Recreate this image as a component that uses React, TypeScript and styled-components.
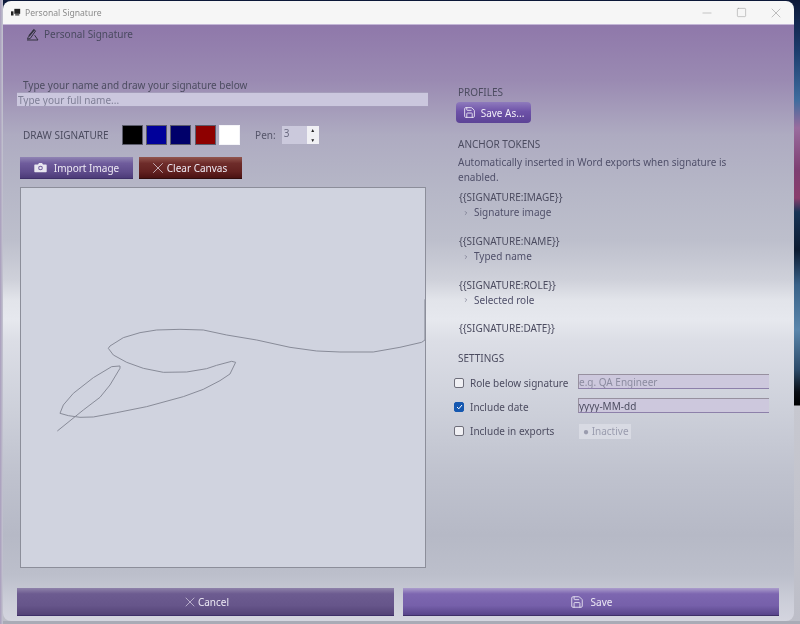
import React from "react";
import styled, { createGlobalStyle } from "styled-components";
import { X, Save, ChevronRight, Minus, Square } from "lucide-react";

const Global = createGlobalStyle`
  html, body { margin: 0; padding: 0; }
  body { width: 800px; height: 624px; overflow: hidden; font-family: "Noto Sans", "Open Sans", sans-serif; }
  * { box-sizing: border-box; }
`;

const Desktop = styled.div`
  width: 800px;
  height: 624px;
  padding: 1px 6px 3px 3px;
  overflow: hidden;
  background:
    linear-gradient(to right, #a89cbc 0, #c4c6d0 3px, transparent 3px),
    linear-gradient(to bottom, transparent 621px, #a9abb6 621px),
    linear-gradient(to bottom, #0c1838 0, #1c3c6c 50px, #3f6c9e 100px, #9a6c9e 128px, #7e3f72 170px, #8a3d6c 198px, #183456 212px, #0c1a30 250px, #3a6288 285px, #5a86ac 330px, #2c4a68 370px, #090d14 392px, #000 405px, #c7c8d0 406px, #bdbec8 624px);
  filter: blur(0.35px);
`;

const Window = styled.div`
  width: 791px;
  height: 620px;
  display: flex;
  flex-direction: column;
  border-radius: 8px;
  overflow: hidden;
`;

const TitleBar = styled.div`
  height: 24px;
  flex: none;
  display: flex;
  align-items: center;
  padding: 0 10px 0 8px;
  background: #f6f6f6;
  border-bottom: 1px solid #c3b6d6;
`;

const TitleText = styled.span`
  margin-left: 4px;
  flex: 1;
  font-size: 8.6px;
  color: #8b8b8b;
`;

const WinButtons = styled.div`
  display: flex;
  align-items: center;
  gap: 21.5px;
  color: #8a8a8a;
`;

const Content = styled.div`
  flex: 1;
  display: flex;
  flex-direction: column;
  padding: 0 15px 6px 14px;
  background: linear-gradient(to bottom,
    #8f78aa 0, #9a8ab2 55px, #aeabc1 110px, #b6b7c7 165px, #bdbfcc 215px, #cfd1da 255px,
    #e2e4ea 275px, #e6e8ee 295px, #dcdee6 315px, #cdd0da 385px, #bfc2ce 450px, #b6b9c6 510px,
    #bcbfcb 550px, #cbcdd8 575px, #d4d5df 596px);
  color: #4c4c60;
  font-size: 10px;
`;

const PageHeader = styled.div`
  height: 54px;
  flex: none;
  display: flex;
  align-items: flex-start;
  gap: 5px;
  padding: 3px 0 0 9px;
  font-size: 10px;
  line-height: 13px;
  color: #4a4a60;
`;

const Columns = styled.div`
  display: grid;
  grid-template-columns: 411px 312px;
  column-gap: 30px;
`;

const LeftCol = styled.div`
  display: flex;
  flex-direction: column;
`;

const RightCol = styled.div`
  display: flex;
  flex-direction: column;
  padding-top: 6px;
`;

const Hint = styled.div`
  height: 13px;
  line-height: 13px;
  padding-left: 6px;
`;

const NameInput = styled.input`
  height: 15px;
  width: 100%;
  padding: 0 1px;
  border: none;
  border-top: 1px solid #a59dbb;
  border-bottom: 1px solid #a59dbb;
  background: #cbc7de;
  font: inherit;
  line-height: 13px;
  outline: none;
  &::placeholder { color: #7f7f96; opacity: 1; }
`;

const ToolRow = styled.div`
  height: 20px;
  margin-top: 18px;
  padding-left: 6px;
  display: flex;
  align-items: center;
`;

const SectionLabel = styled.span`
  color: #4c4c60;
  font-size: 10px;
  line-height: 14px;
`;

const Swatches = styled.div`
  display: flex;
  gap: 3.4px;
  margin-left: 13px;
`;

const Swatch = styled.div<{ $color: string }>`
  width: 21px;
  height: 20px;
  background: ${(p) => p.$color};
  border: 1px solid ${(p) => (p.$color === "#ffffff" ? "#f4f4f8" : "#5c5c6c")};
`;

const PenLabel = styled.span`
  margin-left: 15px;
  color: #55556a;
`;

const Spinner = styled.div`
  margin-left: 6px;
  width: 37px;
  height: 18px;
  display: flex;
  background: #cbc9dc;
`;

const SpinnerValue = styled.span`
  flex: 1;
  font-size: 10px;
  line-height: 14px;
  padding-left: 2px;
  color: #6a6a80;
`;

const SpinnerArrows = styled.div`
  width: 12px;
  display: flex;
  flex-direction: column;
  justify-content: space-between;
  background: #f0f0f4;
  color: #222;
  font-size: 5px;
  line-height: 8px;
  text-align: center;
`;

const ActionRow = styled.div`
  display: flex;
  gap: 6px;
  margin-top: 12px;
  margin-left: 3px;
`;

const ActionButton = styled.button<{ $tone: "purple" | "red" }>`
  height: 22px;
  width: ${(p) => (p.$tone === "purple" ? "113px" : "103px")};
  padding: 0 ${(p) => (p.$tone === "purple" ? "0" : "5px")} 0 0;
  display: flex;
  align-items: center;
  justify-content: center;
  gap: ${(p) => (p.$tone === "purple" ? "7px" : "0")};
  border: none;
  border-bottom: 1px solid ${(p) => (p.$tone === "purple" ? "#3e2f68" : "#300c0c")};
  color: #eeeaf4;
  font: inherit;
  background: ${(p) =>
    p.$tone === "purple"
      ? "linear-gradient(to bottom, #9084b4 0, #6f5c9c 30%, #5f4c8c 70%, #4c3b78 100%)"
      : "linear-gradient(to bottom, #92564f 0, #6e2c2a 30%, #622120 70%, #4a1212 100%)"};
`;

const Canvas = styled.div`
  margin-top: 8px;
  margin-left: 3px;
  width: 406px;
  height: 381px;
  background: #d0d3df;
  border: 1px solid #8c8e9a;
`;

const Ink = styled.svg`
  display: block;
  width: 100%;
  height: 100%;
`;

const Heading = styled.div<{ $gap?: number }>`
  margin-top: ${(p) => p.$gap ?? 0}px;
  line-height: 14px;
  height: 14px;
  font-size: 10px;
  color: #4c4c60;
`;

const SaveAs = styled.button`
  margin: 3px 0 0 -2px;
  width: 75px;
  height: 21px;
  padding: 0;
  display: flex;
  align-items: center;
  justify-content: center;
  gap: 5px;
  border: none;
  border-radius: 4px;
  color: #f0edf7;
  font: inherit;
  background: linear-gradient(to bottom, #8f7bbd 0, #6e52a8 45%, #5c4396 100%);
`;

const Description = styled.p`
  margin: 4px 0 0;
  width: 290px;
  line-height: 15px;
  color: #50506a;
`;

const Token = styled.div<{ $gap: number }>`
  margin-top: ${(p) => p.$gap}px;
  margin-left: 1px;
  height: 14px;
  line-height: 14px;
  color: #4c4c60;
`;

const TokenUse = styled.div`
  height: 15px;
  margin-top: 1px;
  display: flex;
  align-items: center;
  gap: 5px;
  padding-left: 5px;
  line-height: 15px;
  color: #50506a;
`;

const SettingRow = styled.div<{ $gap: number }>`
  margin-top: ${(p) => p.$gap}px;
  margin-left: -4px;
  height: 16px;
  display: grid;
  grid-template-columns: 124px 191px;
  align-items: center;
`;

const CheckLabel = styled.label`
  display: flex;
  align-items: center;
  gap: 6px;
  color: #4c4c60;
`;

const Box = styled.span<{ $on?: boolean }>`
  width: 10px;
  height: 10px;
  display: flex;
  align-items: center;
  justify-content: center;
  border-radius: 2px;
  border: 1px solid ${(p) => (p.$on ? "#1558b0" : "#6e6e7a")};
  background: ${(p) => (p.$on ? "#1558b0" : "#f0f0f4")};
`;

const FieldInput = styled.input`
  height: 15px;
  width: 100%;
  margin-bottom: 2px;
  padding: 0;
  border: none;
  border-top: 1px solid #97909f;
  border-left: 1px solid #97909f;
  border-bottom: 1px solid #8d80aa;
  background: #cdc8dd;
  color: #4c4c60;
  font: inherit;
  outline: none;
  &::placeholder { color: #8c8ca0; opacity: 1; }
`;

const Badge = styled.span`
  width: 52px;
  height: 15px;
  margin-left: 1px;
  padding-left: 4px;
  display: flex;
  align-items: center;
  background: #d8dae3;
  color: #9a9cae;
  line-height: 15px;
`;

const Footer = styled.div`
  margin-top: 20px;
  display: grid;
  grid-template-columns: 377px 376px;
  column-gap: 9px;
`;

const FooterButton = styled.button<{ $primary?: boolean }>`
  height: 28px;
  padding: 0;
  display: flex;
  align-items: center;
  justify-content: center;
  gap: ${(p) => (p.$primary ? "7px" : "0")};
  border: none;
  border-bottom: 1px solid #3e2f68;
  color: #ece8f4;
  font: inherit;
  background: ${(p) =>
    p.$primary
      ? "linear-gradient(to bottom, #ab9dcc 0, #7d66b0 22%, #7660aa 65%, #58448a 100%)"
      : "linear-gradient(to bottom, #8f82aa 0, #6c5b90 22%, #66558a 65%, #534276 100%)"};
`;

const AppIcon = () => (
  <svg width="10" height="10" viewBox="0 0 12 12">
    <rect x="0" y="4" width="3" height="5" fill="#222" />
    <rect x="4" y="1" width="7" height="6" fill="#222" />
    <rect x="5" y="7.5" width="5" height="1.5" fill="#333" />
  </svg>
);

const SignatureIcon = () => (
  <svg width="13" height="13" viewBox="0 0 13 13" fill="none" stroke="#33333f" strokeWidth="1">
    <path d="M1 12h11L8.600 7.200" />
    <path d="M2 9.600 7.800 1.600l1.800 1.300-5.400 7.600-2.600.6z" />
    <path d="M3 8 8.200 1.800" strokeWidth="1.600" />
  </svg>
);

const CameraIcon = () => (
  <svg width="13" height="11" viewBox="0 0 13 11">
    <path d="M1 2.500h3l1-1.500h3l1 1.500h3a.7.7 0 0 1 .7.7v6.300a.7.7 0 0 1-.7.7H1a.7.7 0 0 1-.7-.7V3.200a.7.7 0 0 1 .7-.7z" fill="#e8e6f0" />
    <circle cx="6.500" cy="6" r="2.300" fill="#6f5c9c" />
    <circle cx="6.500" cy="6" r="1.300" fill="#e8e6f0" />
  </svg>
);

const inkPoints =
  "1155,28 1155,150 1145,157 1080,172 1000,186 900,186 830,183 750,172 650,150 560,135 490,120 420,118 350,120 300,128 250,143 210,168 205,175 220,195 260,217 310,235 370,247 440,246 500,236 530,226 575,214 587,217 570,252 540,272 490,298 430,320 320,350 230,368 160,381 120,382 85,377 60,370 70,345 100,310 160,263 215,230 240,228 240,235 210,285 180,322 130,360 52,423";

const colors = ["#000000", "#00009a", "#00006a", "#8e0000", "#ffffff"];

const tokens = [
  { name: "{{SIGNATURE:IMAGE}}", use: "Signature image", gap: 5 },
  { name: "{{SIGNATURE:NAME}}", use: "Typed name", gap: 14 },
  { name: "{{SIGNATURE:ROLE}}", use: "Selected role", gap: 13.5 },
  { name: "{{SIGNATURE:DATE}}", use: "", gap: 13.5 },
];

export default function App() {
  return (
    <Desktop>
      <Global />
      <Window>
        <TitleBar>
          <AppIcon />
          <TitleText>Personal Signature</TitleText>
          <WinButtons>
            <Minus size={14} strokeWidth={0.8} />
            <Square size={11} strokeWidth={1} />
            <X size={16} strokeWidth={0.8} />
          </WinButtons>
        </TitleBar>
        <Content>
          <PageHeader>
            <SignatureIcon />
            Personal Signature
          </PageHeader>
          <Columns>
            <LeftCol>
              <Hint>Type your name and draw your signature below</Hint>
              <NameInput placeholder="Type your full name..." readOnly />
              <ToolRow>
                <SectionLabel>DRAW SIGNATURE</SectionLabel>
                <Swatches>
                  {colors.map((c) => (
                    <Swatch key={c} $color={c} />
                  ))}
                </Swatches>
                <PenLabel>Pen:</PenLabel>
                <Spinner>
                  <SpinnerValue>3</SpinnerValue>
                  <SpinnerArrows>
                    <span>▲</span>
                    <span>▼</span>
                  </SpinnerArrows>
                </Spinner>
              </ToolRow>
              <ActionRow>
                <ActionButton $tone="purple">
                  <CameraIcon />
                  Import Image
                </ActionButton>
                <ActionButton $tone="red">
                  <X size={18} strokeWidth={0.9} />
                  Clear Canvas
                </ActionButton>
              </ActionRow>
              <Canvas>
                <Ink viewBox="21 188 404 379">
                  <g transform="translate(40 290) scale(0.3333)">
                    <polyline points={inkPoints} fill="none" stroke="#888b98" strokeWidth="3" strokeLinejoin="round" />
                  </g>
                </Ink>
              </Canvas>
            </LeftCol>
            <RightCol>
              <Heading>PROFILES</Heading>
              <SaveAs>
                <Save size={13} strokeWidth={1.6} />
                Save As...
              </SaveAs>
              <Heading $gap={14}>ANCHOR TOKENS</Heading>
              <Description>Automatically inserted in Word exports when signature is enabled.</Description>
              {tokens.map((t) => (
                <React.Fragment key={t.name}>
                  <Token $gap={t.gap}>{t.name}</Token>
                  {t.use && (
                    <TokenUse>
                      <ChevronRight size={6} strokeWidth={2} />
                      {t.use}
                    </TokenUse>
                  )}
                </React.Fragment>
              ))}
              <Heading $gap={16}>SETTINGS</Heading>
              <SettingRow $gap={9}>
                <CheckLabel>
                  <Box />
                  Role below signature
                </CheckLabel>
                <FieldInput placeholder="e.g. QA Engineer" readOnly />
              </SettingRow>
              <SettingRow $gap={8}>
                <CheckLabel>
                  <Box $on>
                    <svg width="7" height="6" viewBox="0 0 7 6" fill="none" stroke="#fff" strokeWidth="1">
                      <path d="M1 3l1.800 1.800L6 1" />
                    </svg>
                  </Box>
                  Include date
                </CheckLabel>
                <FieldInput value="yyyy-MM-dd" readOnly />
              </SettingRow>
              <SettingRow $gap={9}>
                <CheckLabel>
                  <Box />
                  Include in exports
                </CheckLabel>
                <Badge>● Inactive</Badge>
              </SettingRow>
            </RightCol>
          </Columns>
          <Footer>
            <FooterButton>
              <X size={16} strokeWidth={0.9} />
              Cancel
            </FooterButton>
            <FooterButton $primary>
              <Save size={14} strokeWidth={1.5} />
              Save
            </FooterButton>
          </Footer>
        </Content>
      </Window>
    </Desktop>
  );
}
